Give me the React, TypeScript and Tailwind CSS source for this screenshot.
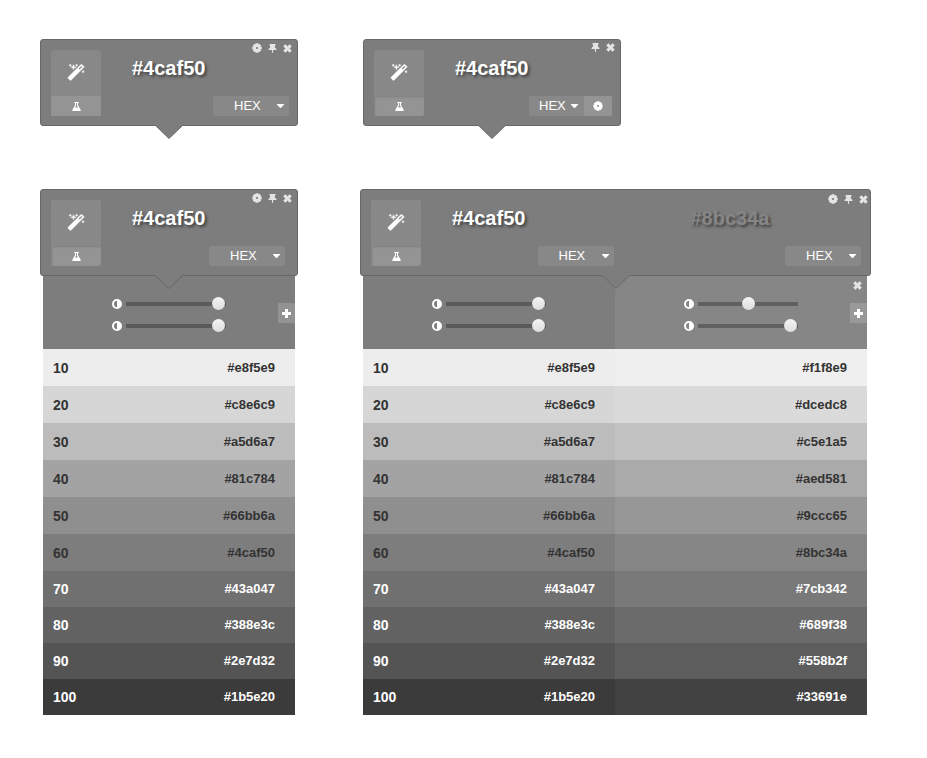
import React from "react";

type IconProps = { className?: string };

function CogIcon({ className }: IconProps) {
  return (
    <svg viewBox="0 0 10 10" className={className} fill="currentColor" fillRule="evenodd" aria-hidden="true">
      <path d="M3.700.300h2.600l.3 1 1-.4L9.100 2.400l-.4 1 1 .3v2.600l-1 .3.400 1-1.500 1.500-1-.4-.3 1H3.700l-.3-1-1 .4L.900 7.600l.4-1-1-.3V3.700l1-.3-.4-1L2.400.900l1 .4zM5 3.900a1.100 1.100 0 1 0 0 2.200 1.100 1.100 0 0 0 0-2.200z" />
    </svg>
  );
}

function PinIcon({ className }: IconProps) {
  return (
    <svg viewBox="0 0 9 9" className={className} fill="currentColor" aria-hidden="true">
      <path d="M1.500 0h6v1.400H6.900v2.200l1.600 1.500v1H5.200L4.900 9h-.8L3.800 6.100H.500v-1l1.600-1.500V1.400H1.500z" />
    </svg>
  );
}

function CloseIcon({ className }: IconProps) {
  return (
    <svg viewBox="0 0 9 9" className={className} fill="currentColor" stroke="currentColor" strokeWidth=".6" strokeLinejoin="round" aria-hidden="true">
      <path d="M2.300.6 4.500 2.500 6.700.6l1.700 1.700-1.900 2.200 1.900 2.200-1.700 1.700-2.200-1.900-2.200 1.900L.6 6.700l1.900-2.200L.6 2.300z" />
    </svg>
  );
}

function PlusIcon({ className }: IconProps) {
  return (
    <svg viewBox="0 0 9 9" className={className} fill="currentColor" aria-hidden="true">
      <path d="M3 0h3v3h3v3H6v3H3V6H0V3h3z" />
    </svg>
  );
}

function AdjustIcon({ className }: IconProps) {
  return (
    <svg viewBox="0 0 10 10" className={className} fill="currentColor" fillRule="evenodd" aria-hidden="true">
      <path d="M5 0a5 5 0 1 1 0 10A5 5 0 0 1 5 0zM5 1.800C3.100 1.800 2 3.200 2 5s1.100 3.200 3 3.200z" />
    </svg>
  );
}

function WandIcon({ className }: IconProps) {
  return (
    <svg viewBox="0 0 1792 1792" className={className} fill="currentColor" stroke="currentColor" strokeWidth="50" aria-hidden="true">
      <path d="M1254 581l293-293-107-107-293 293zm447-293q0 27-18 45l-1286 1286q-18 18-45 18t-45-18l-198-198q-18-18-18-45t18-45l1286-1286q18-18 45-18t45 18l198 198q18 18 18 45zm-1351-190l98 30-98 30-30 98-30-98-98-30 98-30 30-98zm350 162l196 60-196 60-60 196-60-196-196-60 196-60 60-196zm930 478l98 30-98 30-30 98-30-98-98-30 98-30 30-98zm-640-640l98 30-98 30-30 98-30-98-98-30 98-30 30-98z" />
    </svg>
  );
}

function FlaskIcon({ className }: IconProps) {
  return (
    <svg viewBox="0 0 10 10" className={className} fill="currentColor" fillRule="evenodd" aria-hidden="true">
      <path d="M2.500 0h5v1.200h-.8v2.400l2.900 5V10H.400V8.600l2.900-5V1.200h-.8zM4.500 1.200v2.800L3.400 6h3.200L5.500 4V1.200z" />
    </svg>
  );
}

function Arrow() {
  return (
    <svg viewBox="0 0 28 15" className="absolute left-1/2 top-full h-[15px] w-7 -translate-x-1/2" aria-hidden="true">
      <path d="M0 0 14 13.500 28 0z" fill="#7d7d7d" />
      <path d="M.5.5 14 13.500 27.500.5" fill="none" stroke="#686868" />
    </svg>
  );
}

type FormatProps = { className: string; caretClass: string; selectClass: string };

function FormatSelect({ className, caretClass, selectClass }: FormatProps) {
  return (
    <div className={`relative ${className}`}>
      <select
        aria-label="Color format"
        className={`block h-5 w-full appearance-none bg-[#888888] text-[13px] leading-5 text-white outline-none ${selectClass}`}
      >
        <option>HEX</option>
        <option>RGB</option>
        <option>HSL</option>
      </select>
      <svg viewBox="0 0 7 4" className={`pointer-events-none absolute top-2 h-1 w-[7px] ${caretClass}`} fill="#fff" aria-hidden="true">
        <path d="M0 0h7v.7L3.800 4h-.6L0 .7z" />
      </svg>
    </div>
  );
}

function WideSelect({ className }: { className: string }) {
  return <FormatSelect className={`w-[76px] ${className}`} selectClass="rounded-[2px] pl-[21px]" caretClass="right-[5px]" />;
}

function Tile({ active }: { active?: boolean }) {
  return (
    <div className="flex w-[50px] shrink-0 flex-col overflow-hidden rounded-[2px] text-white">
      <button aria-label="Pick a color" className="flex h-[46px] items-center justify-center bg-[#888888]">
        <WandIcon className="size-[18px]" />
      </button>
      <button
        aria-label="Mix"
        className={`flex h-5 items-center justify-center bg-[#949494] ${active ? "shadow-[inset_1px_1px_2px_#7f7f7f]" : ""}`}
      >
        <FlaskIcon className="size-[9px]" />
      </button>
    </div>
  );
}

function Title({ children, dim }: { children: string; dim?: boolean }) {
  return (
    <h2 className={`pt-1 text-xl leading-7 font-bold [text-shadow:2px_2px_3px_rgba(0,0,0,0.5)] ${dim ? "text-[#868686]" : "text-white"}`}>
      {children}
    </h2>
  );
}

function WindowButtons({ settings, place }: { settings?: boolean; place: string }) {
  return (
    <div className={`absolute flex items-center gap-[6px] text-[#e4e4e4] ${place}`}>
      {settings && (
        <button aria-label="Settings">
          <CogIcon className="size-[10px]" />
        </button>
      )}
      <button aria-label="Pin">
        <PinIcon className="size-[9px]" />
      </button>
      <button aria-label="Close">
        <CloseIcon className="size-[9px]" />
      </button>
    </div>
  );
}

type CardProps = { children: React.ReactNode; settings?: boolean; place?: string };

function Card({ children, settings, place = "right-[5px] top-[3px]" }: CardProps) {
  return (
    <section className="relative z-10 rounded-[3px] border border-[#686868] bg-[#7d7d7d]">
      <WindowButtons settings={settings} place={place} />
      {children}
      <Arrow />
    </section>
  );
}

function MainColor({ active, children }: { active?: boolean; children: React.ReactNode }) {
  return (
    <div className="flex pb-[9px] pl-[10px] pt-[10px]">
      <Tile active={active} />
      <div className="flex h-[66px] grow flex-col justify-between pl-[31px]">
        <Title>#4caf50</Title>
        {children}
      </div>
    </div>
  );
}

function Slider({ label, value, track }: { label: string; value: number; track: string }) {
  return (
    <label className="flex h-[13px] items-center gap-1 text-white">
      <AdjustIcon className="size-[10px]" />
      <input
        type="range"
        aria-label={label}
        defaultValue={value}
        className={`h-1 w-[100px] appearance-none [&::-webkit-slider-thumb]:size-[13px] [&::-webkit-slider-thumb]:appearance-none [&::-webkit-slider-thumb]:rounded-full [&::-webkit-slider-thumb]:bg-linear-to-b [&::-webkit-slider-thumb]:from-[#f4f4f4] [&::-webkit-slider-thumb]:to-[#dedede] ${track}`}
      />
    </label>
  );
}

type AdjustProps = { first: number; second: number; bg: string; track: string; plusBg?: string; closable?: boolean };

function AdjustPanel({ first, second, bg, track, plusBg, closable }: AdjustProps) {
  return (
    <div className={`grid h-[73px] grid-cols-[1fr_auto_1fr] ${bg}`}>
      <div />
      <div className="flex flex-col gap-[9px] pt-[21px]">
        <Slider label="Lightness" value={first} track={track} />
        <Slider label="Saturation" value={second} track={track} />
      </div>
      <div className="flex flex-col items-end text-white">
        <div className="h-[27px] pr-[5px] pt-[5px] text-[#e4e4e4]">
          {closable && (
            <button aria-label="Remove color" className="block">
              <CloseIcon className="size-[9px]" />
            </button>
          )}
        </div>
        {plusBg && (
          <button aria-label="Add color" className={`flex h-5 w-[17px] items-center justify-center ${plusBg}`}>
            <PlusIcon className="size-[9px]" />
          </button>
        )}
      </div>
    </div>
  );
}

const shades = [
  { name: "10", a: "#e8f5e9", b: "#f1f8e9", aBg: "bg-[#ededed]", bBg: "bg-[#efefef]", row: "h-[37px] text-[#333333]" },
  { name: "20", a: "#c8e6c9", b: "#dcedc8", aBg: "bg-[#d6d6d6]", bBg: "bg-[#dadada]", row: "h-[37px] text-[#333333]" },
  { name: "30", a: "#a5d6a7", b: "#c5e1a5", aBg: "bg-[#bcbcbc]", bBg: "bg-[#c2c2c2]", row: "h-[37px] text-[#333333]" },
  { name: "40", a: "#81c784", b: "#aed581", aBg: "bg-[#a3a3a3]", bBg: "bg-[#aaaaaa]", row: "h-[37px] text-[#333333]" },
  { name: "50", a: "#66bb6a", b: "#9ccc65", aBg: "bg-[#8f8f8f]", bBg: "bg-[#979797]", row: "h-[37px] text-[#333333]" },
  { name: "60", a: "#4caf50", b: "#8bc34a", aBg: "bg-[#7d7d7d]", bBg: "bg-[#868686]", row: "h-[37px] text-[#333333]" },
  { name: "70", a: "#43a047", b: "#7cb342", aBg: "bg-[#707070]", bBg: "bg-[#797979]", row: "h-9 text-white" },
  { name: "80", a: "#388e3c", b: "#689f38", aBg: "bg-[#626262]", bBg: "bg-[#6b6b6b]", row: "h-9 text-white" },
  { name: "90", a: "#2e7d32", b: "#558b2f", aBg: "bg-[#545454]", bBg: "bg-[#5d5d5d]", row: "h-9 text-white" },
  { name: "100", a: "#1b5e20", b: "#33691e", aBg: "bg-[#3b3b3b]", bBg: "bg-[#424242]", row: "h-9 text-white" },
];

function ShadeTable({ compare }: { compare?: boolean }) {
  return (
    <table className="w-full table-fixed border-collapse text-[13px] leading-4 font-bold">
      <tbody>
        {shades.map((s) => (
          <tr key={s.name} className={s.row}>
            <th scope="row" className={`p-0 pl-[10px] text-left text-sm leading-4 ${s.aBg}`}>
              {s.name}
            </th>
            <td className={`p-0 pr-5 text-right ${s.aBg}`}>{s.a}</td>
            {compare && (
              <td colSpan={2} className={`p-0 pr-5 text-right ${s.bBg}`}>
                {s.b}
              </td>
            )}
          </tr>
        ))}
      </tbody>
    </table>
  );
}

export default function App() {
  return (
    <main className="grid min-h-screen grid-cols-[258px_1fr] content-start items-start gap-x-[62px] gap-y-[63px] bg-white pb-10 pl-10 pr-14 pt-[39px] font-['Liberation_Sans',Arial,sans-serif]">
      <Card settings>
        <MainColor>
          <WideSelect className="mr-2 self-end" />
        </MainColor>
      </Card>

      <div className="ml-[3px] w-[258px]">
        <Card>
          <MainColor active>
            <div className="mr-2 flex self-end">
              <FormatSelect className="w-[55px]" selectClass="rounded-l-[2px] pl-[10px]" caretClass="right-[6px]" />
              <button aria-label="Settings" className="flex h-5 w-7 items-center justify-center rounded-r-[2px] bg-[#949494] text-white">
                <CogIcon className="size-[10px]" />
              </button>
            </div>
          </MainColor>
        </Card>
      </div>

      <div>
        <Card settings>
          <MainColor active>
            <WideSelect className="mr-3 self-end" />
          </MainColor>
        </Card>
        <div className="mx-[3px]">
          <AdjustPanel first={99} second={99} bg="bg-[#7d7d7d]" track="bg-[#5a5a5a]" plusBg="bg-[#929292]" />
          <ShadeTable />
        </div>
      </div>

      <div>
        <Card settings place="right-[2px] top-1">
          <div className="grid grid-cols-2">
            <MainColor active>
              <WideSelect className="mr-[2px] self-end" />
            </MainColor>
            <div className="flex flex-col justify-between pb-[9px] pl-[75px] pr-[9px] pt-[10px]">
              <Title dim>#8bc34a</Title>
              <WideSelect className="self-end" />
            </div>
          </div>
        </Card>
        <div className="ml-[3px] mr-1">
          <div className="grid grid-cols-2">
            <AdjustPanel first={99} second={99} bg="bg-[#7d7d7d]" track="bg-[#5a5a5a]" />
            <AdjustPanel first={51} second={99} bg="bg-[#868686]" track="bg-[#606060]" plusBg="bg-[#999999]" closable />
          </div>
          <ShadeTable compare />
        </div>
      </div>
    </main>
  );
}
